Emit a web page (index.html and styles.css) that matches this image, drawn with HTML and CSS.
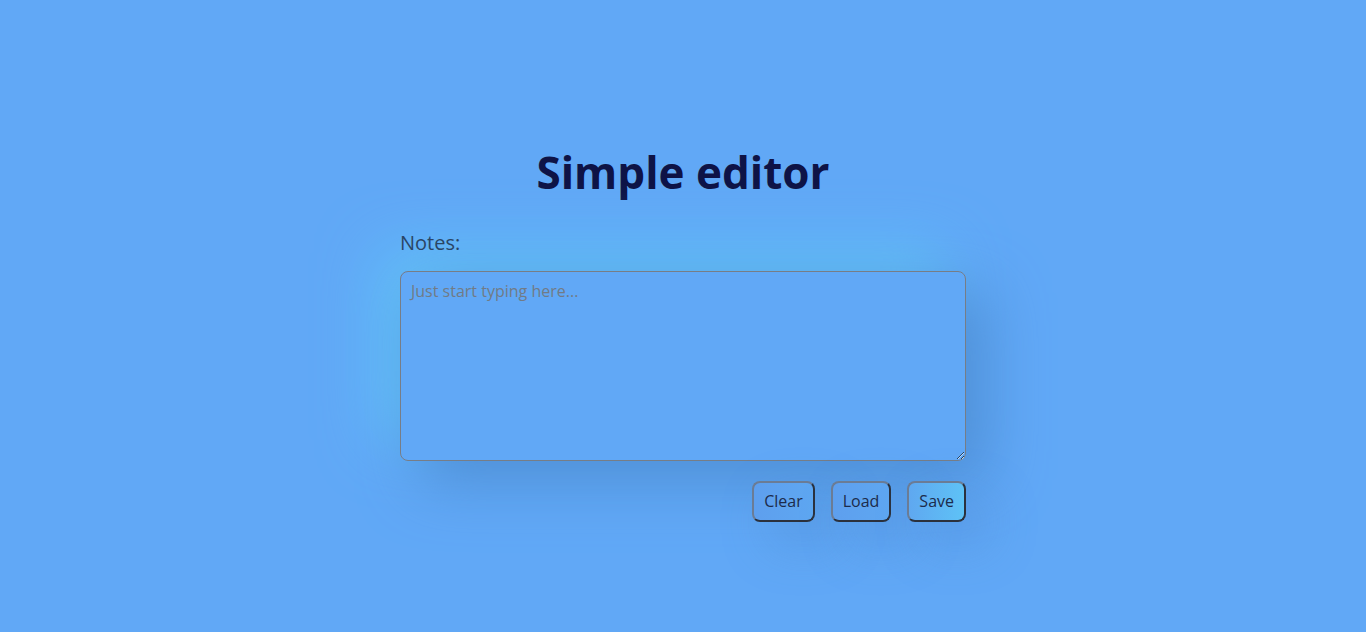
FILE: index.html
```html
<!DOCTYPE html>
<html lang="en">
<head>
<meta charset="utf-8">
<title>Simple editor</title>
<link rel="stylesheet" href="styles.css">
</head>
<body>
<main class="page">
  <h1 class="title">Simple editor</h1>
  <section class="editor">
    <label class="label" for="notes">Notes:</label>
    <textarea id="notes" class="notes" placeholder="Just start typing here..."></textarea>
    <div class="actions">
      <button class="btn">Clear</button>
      <button class="btn">Load</button>
      <button class="btn btn-save">Save</button>
    </div>
  </section>
</main>
</body>
</html>
```
FILE: styles.css
```css
html, body {
  margin: 0;
  padding: 0;
}
body {
  background: #61a8f6;
  font-family: "Open Sans", "Liberation Sans", sans-serif;
  min-height: 100vh;
}
.page {
  width: 566px;
  margin: 0 auto;
  padding-top: 146px;
}
.title {
  margin: 0;
  text-align: center;
  font-size: 44px;
  line-height: 52px;
  font-weight: 700;
  color: #0e1346;
}
.editor {
  margin-top: 31px;
  display: flex;
  flex-direction: column;
}
.label {
  position: relative;
  z-index: 1;
  font-size: 20px;
  line-height: 27px;
  color: #2a4565;
}
.notes {
  margin-top: 15px;
  height: 190px;
  box-sizing: border-box;
  padding: 8px 10px 6px;
  border: 1px solid #777d86;
  border-radius: 8px;
  background: transparent;
  font-family: inherit;
  font-size: 16px;
  color: #1a2a4a;
  resize: vertical;
  box-shadow: 20px 20px 60px #4f8ed6, -20px -20px 60px #63c4f8;
}
.notes::placeholder {
  color: #717b86;
}
.actions {
  margin-top: 20px;
  display: flex;
  justify-content: flex-end;
  gap: 16px;
}
.btn {
  font-family: inherit;
  font-size: 16px;
  line-height: 22px;
  padding: 7px 10px 8px;
  color: #1c2b4b;
  background: linear-gradient(to right, #5e9fee, #5ea7f1);
  border: 2px solid;
  border-color: #6b7c95 #2b313d #2b313d #6b7c95;
  border-radius: 8px;
  box-shadow: 20px 20px 50px rgba(75, 135, 205, 0.45);
}
.btn-save {
  background: linear-gradient(to right, #5fa8f0, #5ec2f6);
}
```
